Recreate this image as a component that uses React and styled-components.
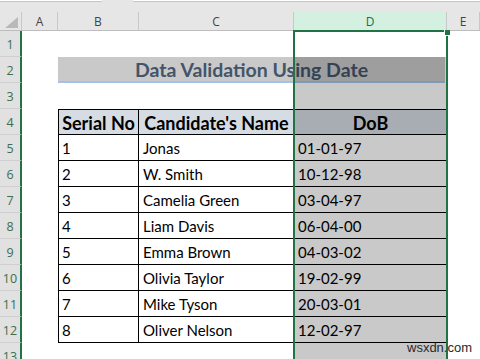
import React from 'react';
import styled, { createGlobalStyle } from 'styled-components';

const Global = createGlobalStyle`
  html, body { margin: 0; padding: 0; background: #fff; overflow: hidden; }
  * { box-sizing: border-box; }
`;

const Window = styled.div`
  position: relative;
  width: 480px;
  height: 359px;
  overflow: hidden;
  background: #fff;
  font-family: Lato, "Noto Sans", sans-serif;
`;

const FormulaStrip = styled.div`
  height: 12px;
  background: #e6e6e6;
  display: flex;
  gap: 31px;
  align-items: flex-start;
`;

const StripBox = styled.div`
  height: 2px;
  width: ${p => p.$w || 'auto'};
  flex: ${p => (p.$grow ? 1 : 'none')};
  background: #fff;
  border-bottom: 1px solid #c6c6c6;
`;

const Sheet = styled.div`
  display: grid;
  grid-template-columns: 22px 36px 81px 155px 153px 33px;
  grid-template-rows: 19px repeat(13, 26px);
`;

const Corner = styled.div`
  background: #e6e6e6;
  border-right: 1px solid #c8c8c8;
  border-bottom: 1px solid #bdbdbd;
  display: flex;
  align-items: flex-end;
  justify-content: flex-end;
  padding: 0 3px 2px 0;
`;

const ColHead = styled.div`
  background: ${p => (p.$active ? '#d3f0e0' : '#e6e6e6')};
  color: ${p => (p.$active ? '#1f6e43' : '#444')};
  border-right: 1px solid #c8c8c8;
  border-bottom: 1px solid #bdbdbd;
  font-family: "Open Sans", "Noto Sans", sans-serif;
  font-size: 12px;
  display: flex;
  align-items: center;
  justify-content: center;
  padding-top: 1px;
`;

const RowHead = styled.div`
  background: #e1e1e1;
  border-right: 2px solid #217346;
  border-bottom: 1px solid #cfcfcf;
  color: #3d6e4f;
  font-family: "Open Sans", "Noto Sans", sans-serif;
  font-size: 12.5px;
  display: flex;
  align-items: center;
  justify-content: center;
  padding-top: 2px;
`;

const Blank = styled.div`
  background: #fff;
`;

const Title = styled.div`
  grid-column: span 3;
  background: #c9c9c9;
  border-bottom: 2px solid #a3c2e6;
  color: #44546a;
  font-weight: 700;
  font-size: 19.5px;
  display: flex;
  align-items: center;
  justify-content: center;
  margin-right: 2px;
`;

const Cell = styled.div`
  background: ${p => p.$bg || '#fff'};
  border-right: 1px solid #000;
  border-bottom: 1px solid #000;
  border-left: ${p => (p.$first ? '1px solid #000' : 'none')};
  border-top: ${p => (p.$head ? '1px solid #000' : 'none')};
  font-weight: ${p => (p.$head ? 700 : 400)};
  font-size: ${p => (p.$head ? '18px' : '15px')};
  color: #000;
  display: flex;
  align-items: center;
  justify-content: ${p => (p.$head ? 'center' : 'flex-start')};
  padding: 1px 3px 0 ${p => (p.$first ? '3px' : '4px')};
  white-space: nowrap;
  overflow: hidden;
`;

const Selection = styled.div`
  position: absolute;
  left: 293px;
  top: 30px;
  width: 155px;
  bottom: -4px;
  border: 2px solid #217346;
  display: flex;
  flex-direction: column;
  pointer-events: none;
`;

const ActiveSpace = styled.div`
  height: 25px;
  flex: none;
`;

const Shade = styled.div`
  flex: 1;
  background: rgba(0, 0, 0, 0.21);
`;

const Handle = styled.div`
  position: absolute;
  right: -4px;
  top: -2px;
  width: 6px;
  height: 6px;
  background: #217346;
  border-left: 1px solid #fff;
  border-bottom: 1px solid #fff;
`;

const Watermark = styled.div`
  position: absolute;
  left: 407px;
  top: 340px;
  font-family: "Liberation Sans", Arial, sans-serif;
  font-size: 13px;
  color: #2a2a2a;
`;

const columns = ['A', 'B', 'C', 'D', 'E'];

const data = [
  ['1', 'Jonas', '01-01-97'],
  ['2', 'W. Smith', '10-12-98'],
  ['3', 'Camelia Green', '03-04-97'],
  ['4', 'Liam Davis', '06-04-00'],
  ['5', 'Emma Brown', '04-03-02'],
  ['6', 'Olivia Taylor', '19-02-99'],
  ['7', 'Mike Tyson', '20-03-01'],
  ['8', 'Oliver Nelson', '12-02-97'],
];

const CornerTriangle = () => (
  <svg width="13" height="11" viewBox="0 0 13 11">
    <polygon points="13,0 13,11 0,11" fill="#b9b9b9" />
  </svg>
);

export default function App() {
  const rows = [];
  rows.push(
    <React.Fragment key="r1">
      <RowHead>1</RowHead>
      <Blank /><Blank /><Blank /><Blank /><Blank />
    </React.Fragment>
  );
  rows.push(
    <React.Fragment key="r2">
      <RowHead>2</RowHead>
      <Blank />
      <Title>Data Validation Using Date</Title>
      <Blank />
    </React.Fragment>
  );
  rows.push(
    <React.Fragment key="r3">
      <RowHead>3</RowHead>
      <Blank /><Blank /><Blank /><Blank /><Blank />
    </React.Fragment>
  );
  rows.push(
    <React.Fragment key="r4">
      <RowHead>4</RowHead>
      <Blank />
      <Cell $head $first $bg="#d6dce4">Serial No</Cell>
      <Cell $head $bg="#d6dce4">Candidate's Name</Cell>
      <Cell $head $bg="#d6dce4">DoB</Cell>
      <Blank />
    </React.Fragment>
  );
  data.forEach((d, i) => {
    rows.push(
      <React.Fragment key={'d' + i}>
        <RowHead>{i + 5}</RowHead>
        <Blank />
        <Cell $first>{d[0]}</Cell>
        <Cell>{d[1]}</Cell>
        <Cell>{d[2]}</Cell>
        <Blank />
      </React.Fragment>
    );
  });
  rows.push(
    <React.Fragment key="r13">
      <RowHead>13</RowHead>
      <Blank /><Blank /><Blank /><Blank /><Blank />
    </React.Fragment>
  );

  return (
    <Window>
      <Global />
      <FormulaStrip>
        <StripBox $w="102px" />
        <StripBox $grow />
      </FormulaStrip>
      <Sheet>
        <Corner><CornerTriangle /></Corner>
        {columns.map(c => (
          <ColHead key={c} $active={c === 'D'}>{c}</ColHead>
        ))}
        {rows}
      </Sheet>
      <Selection>
        <ActiveSpace />
        <Shade />
        <Handle />
      </Selection>
      <Watermark>wsxdn.com</Watermark>
    </Window>
  );
}
